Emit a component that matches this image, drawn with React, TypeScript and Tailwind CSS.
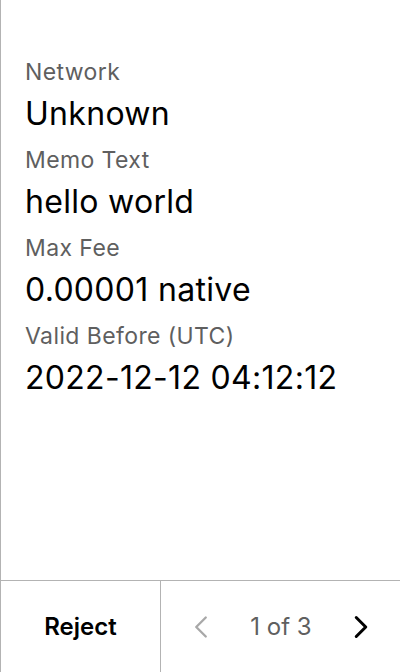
import { ChevronLeft, ChevronRight } from 'lucide-react';

const rows = [
  { label: 'Network', value: 'Unknown' },
  { label: 'Memo Text', value: 'hello world' },
  { label: 'Max Fee', value: '0.00001 native' },
  { label: 'Valid Before (UTC)', value: '2022-12-12 04:12:12' },
];

const App = () => {
  return (
    <div className="h-[672px] w-[400px] bg-white border-l border-[#b3b3b3] flex flex-col font-['Inter',sans-serif]">
      <div className="flex-1 px-6 pt-[56px]">
        {rows.map((r) => (
          <div key={r.label} className="mb-[4px]">
            <p className="text-[23px] leading-[32px] tracking-[0.4px] text-[#5f5f5f]">{r.label}</p>
            <p className="text-[32px] leading-[52px] tracking-[0.3px] text-black">{r.value}</p>
          </div>
        ))}
      </div>
      <div className="h-[92px] border-t border-[#b3b3b3] flex">
        <button className="w-[160px] border-r border-[#b3b3b3] flex items-center justify-center text-[24px] font-semibold text-black">
          Reject
        </button>
        <div className="flex-1 flex items-center justify-between pl-[21px] pr-[20px]">
          <ChevronLeft size={38} strokeWidth={1.5} className="text-[#a8a8a8]" />
          <span className="text-[24px] text-[#5f5f5f]">1 of 3</span>
          <ChevronRight size={38} strokeWidth={1.9} className="text-black" />
        </div>
      </div>
    </div>
  );
};

export default App;
